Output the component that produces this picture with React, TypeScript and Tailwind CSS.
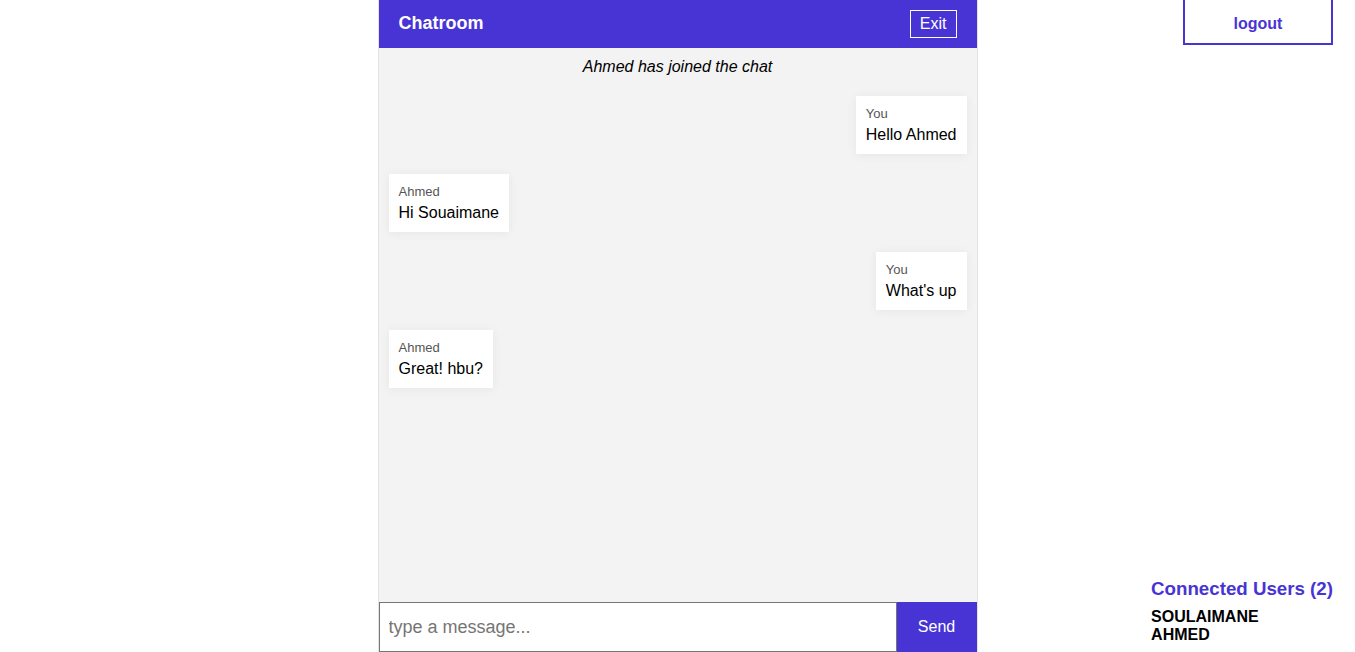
const messages = [
  { from: "You", text: "Hello Ahmed", mine: true },
  { from: "Ahmed", text: "Hi Souaimane", mine: false },
  { from: "You", text: "What's up", mine: true },
  { from: "Ahmed", text: "Great! hbu?", mine: false },
];

const users = ["SOULAIMANE", "AHMED"];

function Bubble({ from, text, mine }: { from: string; text: string; mine: boolean }) {
  return (
    <div className={mine ? "flex justify-end" : "flex justify-start"}>
      <div className="bg-white px-[10px] py-[10px] shadow-[0_1px_10px_rgba(0,0,0,0.06)]">
        <div className="text-[13px] leading-[15px] text-[#555] mb-[5px]">{from}</div>
        <div className="text-base leading-[18px] text-black">{text}</div>
      </div>
    </div>
  );
}

function Chatroom() {
  return (
    <div className="w-[600px] shrink-0 h-screen flex flex-col bg-[#f3f3f3] border-x border-[#e3e3e3]">
      <div className="h-12 shrink-0 bg-[#4834d4] flex items-center justify-between pl-5 pr-5">
        <span className="text-white font-bold text-lg leading-[20px] -mt-[2px]">Chatroom</span>
        <button className="border border-white text-white text-base leading-[18px] px-[9px] py-1">Exit</button>
      </div>
      <div className="flex-1 flex flex-col px-[10px]">
        <p className="italic text-base leading-[18px] text-black text-center pt-[10px] mb-[20px]">
          Ahmed has joined the chat
        </p>
        <div className="flex flex-col gap-5">
          {messages.map((m, i) => (
            <Bubble key={i} {...m} />
          ))}
        </div>
      </div>
      <div className="h-[50px] shrink-0 flex">
        <input
          className="flex-1 border border-[#767676] bg-white pl-[9px] text-lg text-black placeholder:text-[#757575] outline-none"
          placeholder="type a message..."
        />
        <button className="w-20 bg-[#4834d4] text-white text-base">Send</button>
      </div>
    </div>
  );
}

export default function App() {
  return (
    <div className="h-screen w-full flex bg-white overflow-hidden font-['Liberation_Sans',Arial,sans-serif]">
      <div className="flex-1" />
      <Chatroom />
      <div className="flex-1 min-w-0">
        <div className="h-full flex flex-col justify-between items-end pr-[22px] pb-[8px]">
          <button className="-mt-[2px] h-[47px] w-[150px] pt-1 border-2 border-[#4834d4] text-[#4834d4] font-bold text-base flex items-center justify-center">
            logout
          </button>
          <div className="text-left">
            <h3 className="text-[18.72px] font-bold text-[#4834d4] leading-[22px] mb-2">
              Connected Users ({users.length})
            </h3>
            {users.map((u) => (
              <div key={u} className="font-bold text-base leading-[18px] text-black">
                {u}
              </div>
            ))}
          </div>
        </div>
      </div>
    </div>
  );
}
